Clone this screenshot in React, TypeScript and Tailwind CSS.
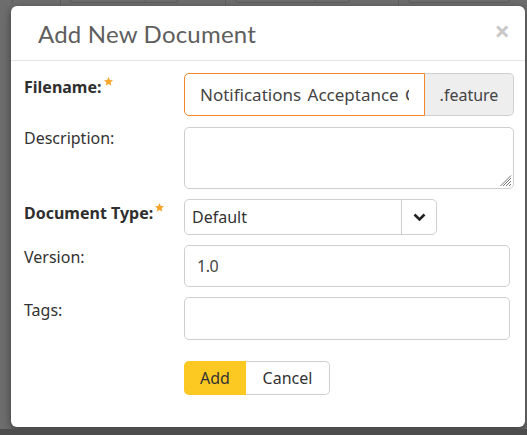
import React from "react";

function Star() {
  return (
    <svg width="11" height="11" viewBox="0 0 24 24" className="inline-block align-top -mt-[3px] ml-[1px]">
      <path d="M12 2l2.9 6.6 7.1.6-5.4 4.7 1.6 7-6.2-3.7-6.2 3.7 1.6-7L2 9.2l7.1-.6z" fill="#f5a52a" />
    </svg>
  );
}

export default function App() {
  const font = { fontFamily: '"Noto Sans", "Open Sans", sans-serif' };
  return (
    <div className="w-[527px] h-[435px] bg-[#6d6d6d] overflow-hidden flex flex-col" style={font}>
      {/* dimmed page strip */}
      <div className="h-[6px] flex items-end relative">
        <div className="absolute left-[12px] top-0 h-[3px] w-px bg-[#5c5c5c]" />
        <div className="absolute left-[60px] top-0 h-[6px] w-px bg-[#5c5c5c]" />
        <div className="absolute left-[70px] -top-[4px] h-[7px] w-[108px] border border-[#5a5a5a] rounded-[3px]" />
        <div className="absolute left-[145px] top-0 h-[3px] w-px bg-[#5c5c5c]" />
        <div className="absolute left-[225px] top-0 h-[6px] w-px bg-[#5c5c5c]" />
        <div className="absolute left-[235px] -top-[4px] h-[7px] w-[115px] border border-[#5a5a5a] rounded-[3px]" />
        <div className="absolute left-[315px] top-0 h-[3px] w-px bg-[#5c5c5c]" />
        <div className="absolute left-[398px] top-0 h-[6px] w-px bg-[#5c5c5c]" />
        <div className="absolute left-[408px] -top-[4px] h-[7px] w-[102px] border border-[#5a5a5a] rounded-[3px]" />
      </div>
      <div className="ml-[11px] w-[514px] h-[421px] bg-white rounded-[6px] shadow-[0_3px_8px_rgba(0,0,0,0.45)] flex flex-col">
        <div className="h-[55px] border-b border-[#e5e5e5] flex items-center justify-between pl-[27px] pr-[15px]">
          <span
            className="text-[24px] text-[#5e5e5e] tracking-[0.2px] pt-[2px]"
            style={{ fontFamily: 'Lato, "Open Sans", sans-serif' }}
          >
            Add New Document
          </span>
          <span className="text-[#c8c8c8] text-[27px] font-bold leading-none -mt-[6px]">×</span>
        </div>
        <div className="flex flex-col pl-[13px] pt-[12px] text-[#333] text-[16px]">
          {/* Filename */}
          <div className="flex">
            <label className="w-[160px] pt-[6px] font-bold text-[#2f2f2f] leading-none">
              Filename:<Star />
            </label>
            <div className="flex h-[43px]">
              <input
                readOnly
                value="Notifications Acceptance Criteria"
                className="w-[241px] h-[43px] border border-[#f0872b] rounded-l-[5px] pl-[15px] pr-[15px] text-[17px] text-[#444] [word-spacing:2px] outline-none bg-white"
                style={font}
              />
              <div className="w-[89px] border border-l-0 border-[#cfcfcf] bg-[#eeeeee] rounded-r-[5px] flex items-center justify-center text-[16px] text-[#444]">
                .feature
              </div>
            </div>
          </div>
          {/* Description */}
          <div className="flex mt-[11px]">
            <label className="w-[160px] pt-[3px] leading-none">Description:</label>
            <div className="relative w-[330px] h-[62px] border border-[#cfcfcf] rounded-[5px]">
              <svg className="absolute right-[1px] bottom-[1px]" width="12" height="12" viewBox="0 0 12 12">
                <path d="M11 3L3 11M11 6L6 11M11 9L9 11M11 0.5L0.5 11" stroke="#777" strokeWidth="1" />
              </svg>
            </div>
          </div>
          {/* Document Type */}
          <div className="flex mt-[10px]">
            <label className="w-[160px] pt-[6px] font-bold text-[#2f2f2f] leading-none">
              Document Type:<Star />
            </label>
            <div className="w-[253px] h-[36px] border border-[#cfcfcf] rounded-[5px] flex">
              <div className="flex-1 flex items-center pl-[7px] text-[16px] text-[#333]">Default</div>
              <div className="w-[35px] border-l border-[#cfcfcf] flex items-center justify-center">
                <svg width="13" height="9" viewBox="0 0 13 9">
                  <path d="M1.5 1.5L6.5 6.5L11.5 1.5" stroke="#222" strokeWidth="2.6" fill="none" />
                </svg>
              </div>
            </div>
          </div>
          {/* Version */}
          <div className="flex mt-[10px]">
            <label className="w-[160px] pt-[4px] leading-none">Version:</label>
            <div className="w-[326px] h-[42px] border border-[#cfcfcf] rounded-[5px] flex items-center pl-[12px] text-[16px] text-[#444] tracking-[-0.5px]">
              1.0
            </div>
          </div>
          {/* Tags */}
          <div className="flex mt-[10px]">
            <label className="w-[160px] pt-[5px] leading-none">Tags:</label>
            <div className="w-[326px] h-[43px] border border-[#cfcfcf] rounded-[5px]" />
          </div>
          {/* Buttons */}
          <div className="flex mt-[21px] pl-[160px]">
            <button className="h-[34px] w-[62px] bg-[#fcc923] rounded-l-[5px] text-[16px] text-[#333]">Add</button>
            <button className="h-[34px] w-[84px] border border-l-0 border-[#cfcfcf] rounded-r-[5px] text-[16px] text-[#333] bg-white">
              Cancel
            </button>
          </div>
        </div>
      </div>
      <div className="flex-1 mt-[2px] bg-[#4d4d4d]" />
    </div>
  );
}
